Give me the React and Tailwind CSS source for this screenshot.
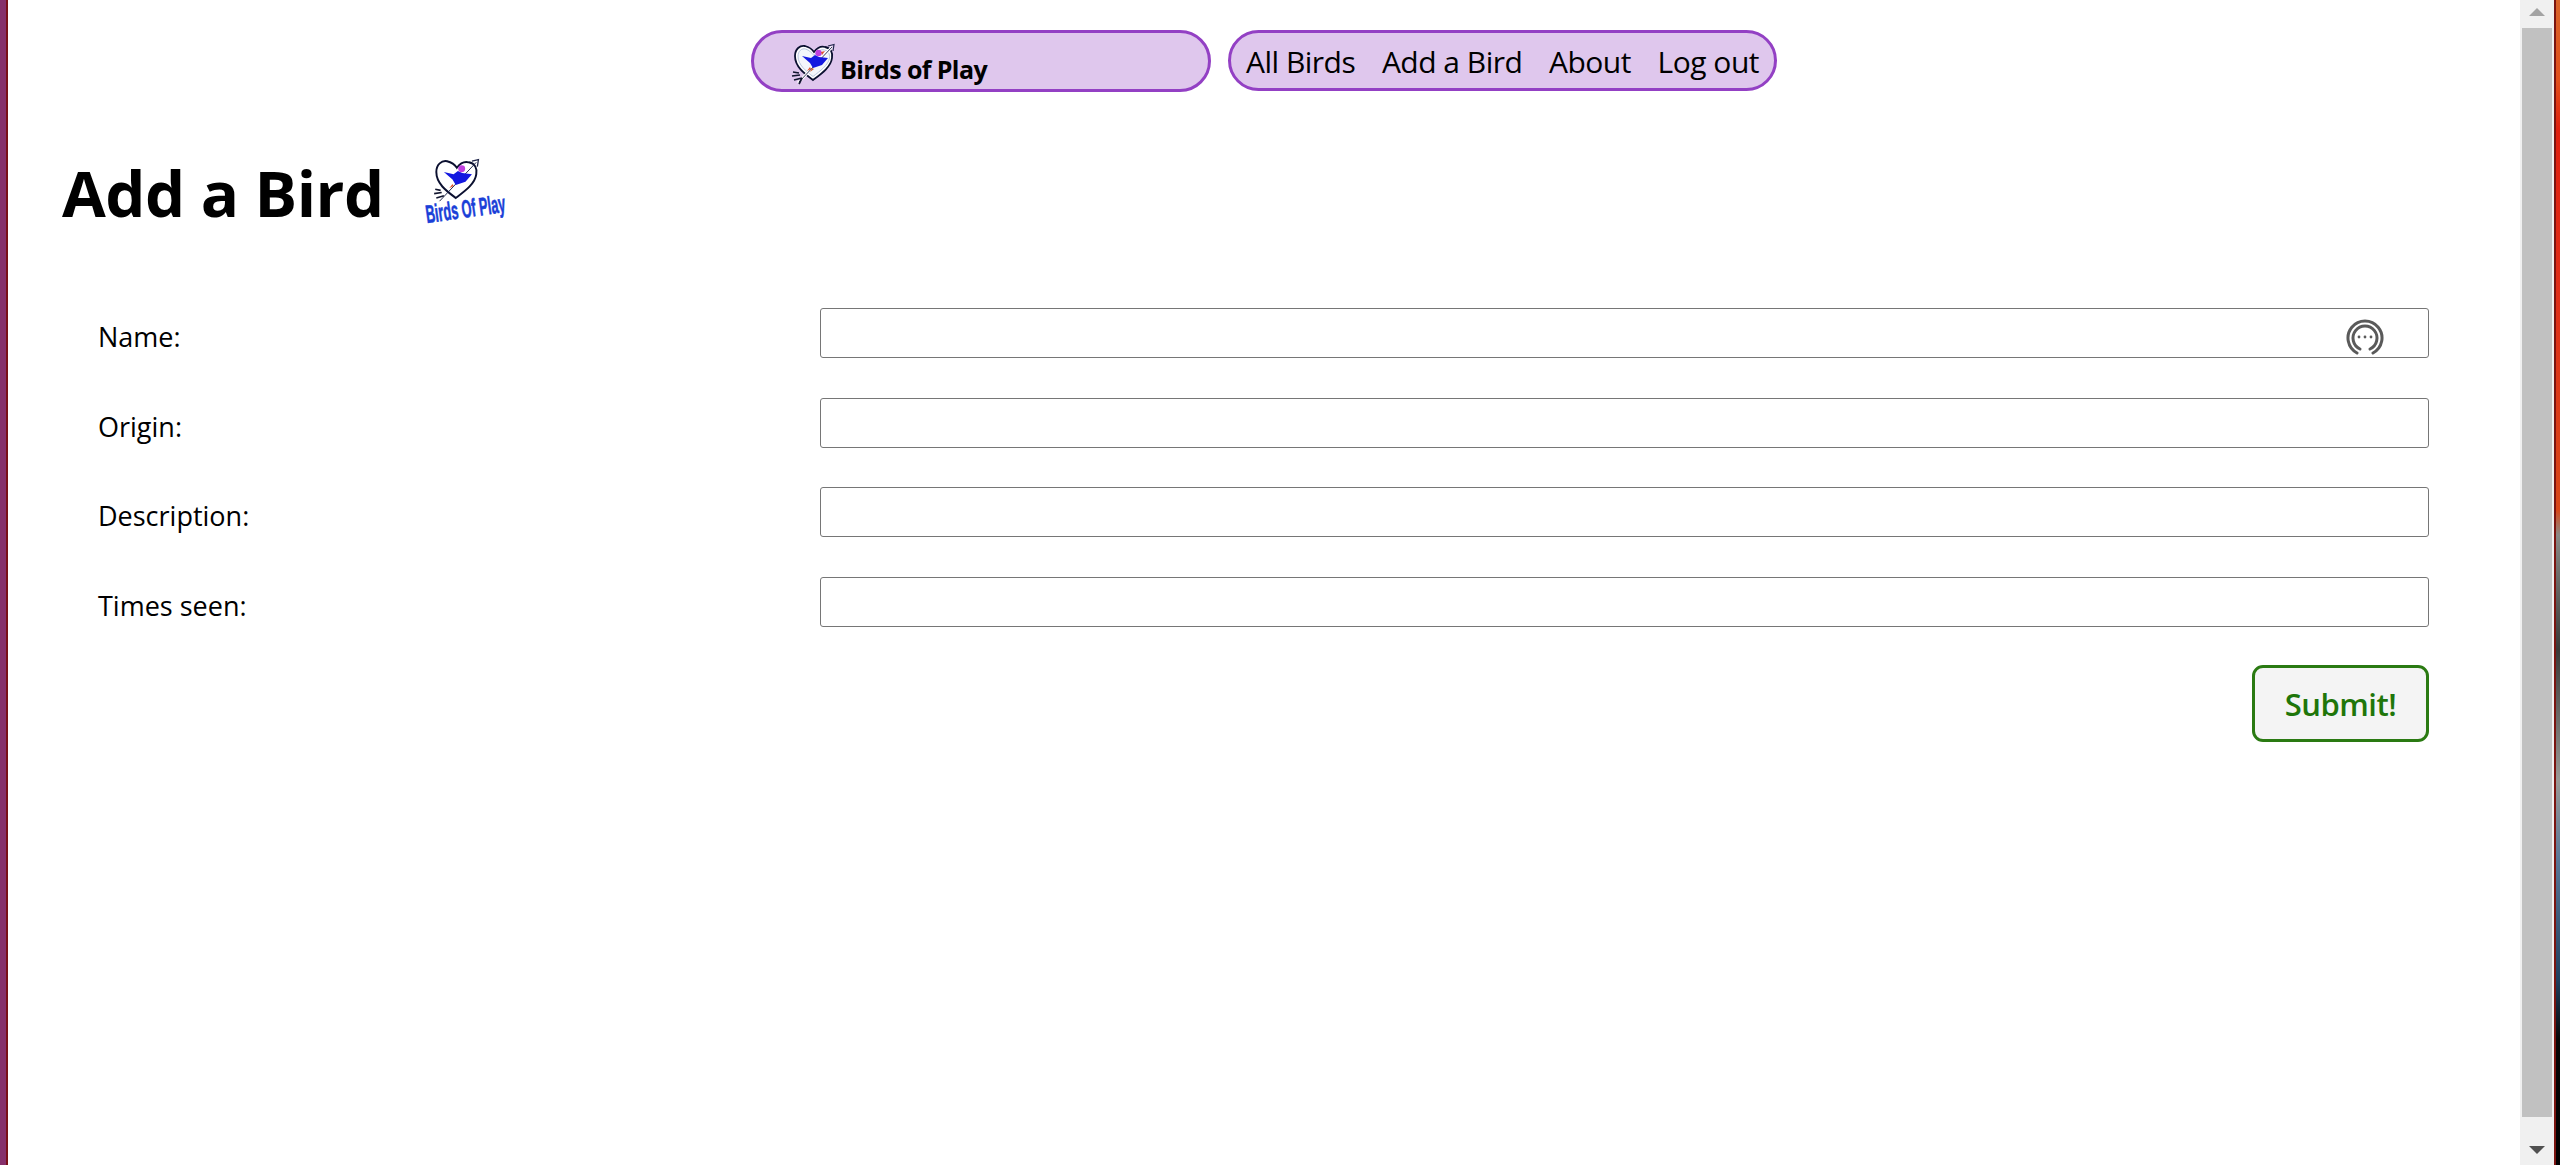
const fontStack = { fontFamily: '"Open Sans", "Noto Sans", sans-serif' };

// heart with an arrow through it and a small blue bird
const HeartBird = ({ className }) => (
  <svg viewBox="0 0 46 42" className={className}>
    <path d="M22 37 C14 31 4 24 4 13 C4 6 9 2 14 3 C18 4 21 6 23 9 C26 5 30 3 34 4 C40 5 42 10 41 15 C40 24 30 31 22 37 Z" fill="#fff" stroke="#0b1030" strokeWidth="1.8" />
    <path d="M22 33.5 C15 28 7 22 7 13 C7 8 11 5 14.5 6 C18 7 21 10 23 12.5 C26 8 30 6 33.5 7 C37.5 8 39 11 38.5 15 C37.5 22 29 28 22 33.5 Z" fill="#f4f6fb" stroke="#b9c6de" strokeWidth="1" />
    <path d="M7 40 L41 4" stroke="#fff" strokeWidth="2.6" />
    <path d="M8 39 L41 4" stroke="#20264a" strokeWidth="0.9" />
    <path d="M37 3 L43 1.5 L42 8" fill="none" stroke="#20264a" strokeWidth="1.2" />
    <path d="M1 33 L9 32 M3 37 L11 35 M8 41 L11 35 M2 29 L8 30" stroke="#11152e" strokeWidth="1.7" fill="none" />
    <path d="M11 13 L20 15 L24 12 L28 14 L37 15 L31 22 L22 25 L19 20 L11 13 Z" fill="#1418e0" />
    <circle cx="27.5" cy="10" r="3.2" fill="#c040e0" />
    <path d="M30 9 L34 8 L31 12 Z" fill="#e05030" />
    <path d="M16 28 L19 24 L20 26 Z" fill="#e0502a" />
    <path d="M19 29 L21 25 L23 26 Z" fill="#d06030" />
  </svg>
);

const FormRow = ({ label, icon }) => (
  <div className="flex h-[50px] items-start mb-[39.6px]">
    <label className="w-[759px] pl-[37px] pt-[9px] text-[27px] leading-[40px] text-black">{label}</label>
    <div className="relative flex-1">
      <input type="text" className="block h-[50px] w-full rounded-[3px] border border-[#767676] bg-white" />
      {icon && (
        <svg viewBox="0 0 38 38" className="absolute right-[45px] top-[10px] h-[38px] w-[38px]" fill="none" stroke="#5a5a5a" strokeLinecap="round">
          <path d="M11 35 A17 17 0 1 1 27 35" strokeWidth="3" />
          <path d="M14 31 A12 12 0 1 1 24 31" strokeWidth="3" />
          <circle cx="13" cy="19" r="1.4" fill="#5a5a5a" stroke="none" />
          <circle cx="19" cy="19" r="1.4" fill="#5a5a5a" stroke="none" />
          <circle cx="25" cy="19" r="1.4" fill="#5a5a5a" stroke="none" />
        </svg>
      )}
    </div>
  </div>
);

const App = () => {
  return (
    <div className="flex h-[1165px] w-full overflow-hidden bg-white" style={fontStack}>
      <div className="flex w-[8px] shrink-0">
        <div className="w-[6px] bg-[#86306b]" />
        <div className="w-[2px] bg-[#7a1018]" />
      </div>

      <main className="min-w-0 flex-1 bg-white">
        <nav className="flex h-[92px] items-start justify-center gap-[17px] pt-[30px]">
          <div className="flex h-[62px] w-[460px] items-center rounded-[31px] border-[3px] border-[#9340c4] bg-[#dfc7ed] pl-[37px]">
            <HeartBird className="mt-[6px] h-[42px] w-[46px] shrink-0" />
            <span className="ml-[3px] mt-[16px] text-[25px] leading-[34px] font-bold tracking-[-0.6px] text-black">Birds of Play</span>
          </div>
          <div className="flex h-[61px] w-[549px] items-center justify-between rounded-[31px] border-[3px] border-[#9340c4] bg-[#dfc7ed] px-[15px] pt-[1px] text-[30px] tracking-[-0.5px] text-black">
            <a>All Birds</a>
            <a>Add a Bird</a>
            <a>About</a>
            <a>Log out</a>
          </div>
        </nav>

        <header className="mt-[42px] flex h-[108px] items-center pl-[54px] pt-[10px]">
          <h1 className="text-[63.5px] leading-[80px] font-bold tracking-[-0.5px] text-black">Add a Bird</h1>
          <svg viewBox="0 0 84 66" className="ml-[41px] mt-[-4px] h-[66px] w-[84px] overflow-visible">
            <g transform="translate(7,0) scale(1.08)">
              <path d="M22 37 C14 31 4 24 4 13 C4 6 9 2 14 3 C18 4 21 6 23 9 C26 5 30 3 34 4 C40 5 42 10 41 15 C40 24 30 31 22 37 Z" fill="#fff" stroke="#0b1030" strokeWidth="1.8" />
              <path d="M7 40 L41 4" stroke="#20264a" strokeWidth="0.9" />
              <path d="M37 3 L43 1.5 L42 8" fill="none" stroke="#20264a" strokeWidth="1.2" />
              <path d="M2 33 L9 32 M4 37 L11 35 M3 29 L8 30" stroke="#11152e" strokeWidth="1.5" fill="none" />
              <path d="M11 13 L20 15 L24 12 L28 14 L37 15 L31 22 L22 25 L19 20 L11 13 Z" fill="#1418e0" />
              <circle cx="27.5" cy="10" r="3.2" fill="#c040e0" />
              <path d="M16 28 L19 24 L20 26 Z" fill="#e0502a" />
            </g>
            <text x="2" y="65" transform="rotate(-8 2 65)" textLength="80" lengthAdjust="spacingAndGlyphs" fontFamily="Liberation Sans" fontWeight="700" fontSize="25" fill="#1a3fd8" stroke="#1a3fd8" strokeWidth="0.6">Birds Of Play</text>
          </svg>
        </header>

        <form className="mt-[66px] pr-[91px] pl-[53px]">
          <FormRow label="Name:" icon />
          <FormRow label="Origin:" />
          <FormRow label="Description:" />
          <FormRow label="Times seen:" />
          <div className="mt-[-1px] flex justify-end">
            <button type="button" className="flex h-[77px] w-[177px] items-center justify-center rounded-[11px] border-[3px] border-[#2a7a12] bg-[#f4f4f4] text-[31px] font-semibold tracking-[-0.5px] text-[#1f760a]">
              Submit!
            </button>
          </div>
        </form>
      </main>

      <div className="flex w-[34px] shrink-0 flex-col items-center bg-[#f0f0f0] pt-[8px]">
        <div className="h-0 w-0 border-x-[8px] border-b-[8px] border-x-transparent border-b-[#a3a3a3]" />
        <div className="mt-[12px] h-[1089px] w-[30px] bg-[#c1c1c1]" />
        <div className="mt-[29px] h-0 w-0 border-x-[8px] border-t-[8px] border-x-transparent border-t-[#505050]" />
      </div>

      <div className="flex w-[6px] shrink-0">
        <div className="w-[2px] bg-[#7a1410]" />
        <div className="w-[4px] bg-[linear-gradient(to_bottom,#d8642a_0px,#e2501c_80px,#e0200f_130px,#e0301a_300px,#d8481a_510px,#8a8a86_535px,#3a3a38_650px,#9a9a96_780px,#5a7898_860px,#20405f_980px,#060606_1040px,#000_1165px)]" />
      </div>
    </div>
  );
};

export default App;
